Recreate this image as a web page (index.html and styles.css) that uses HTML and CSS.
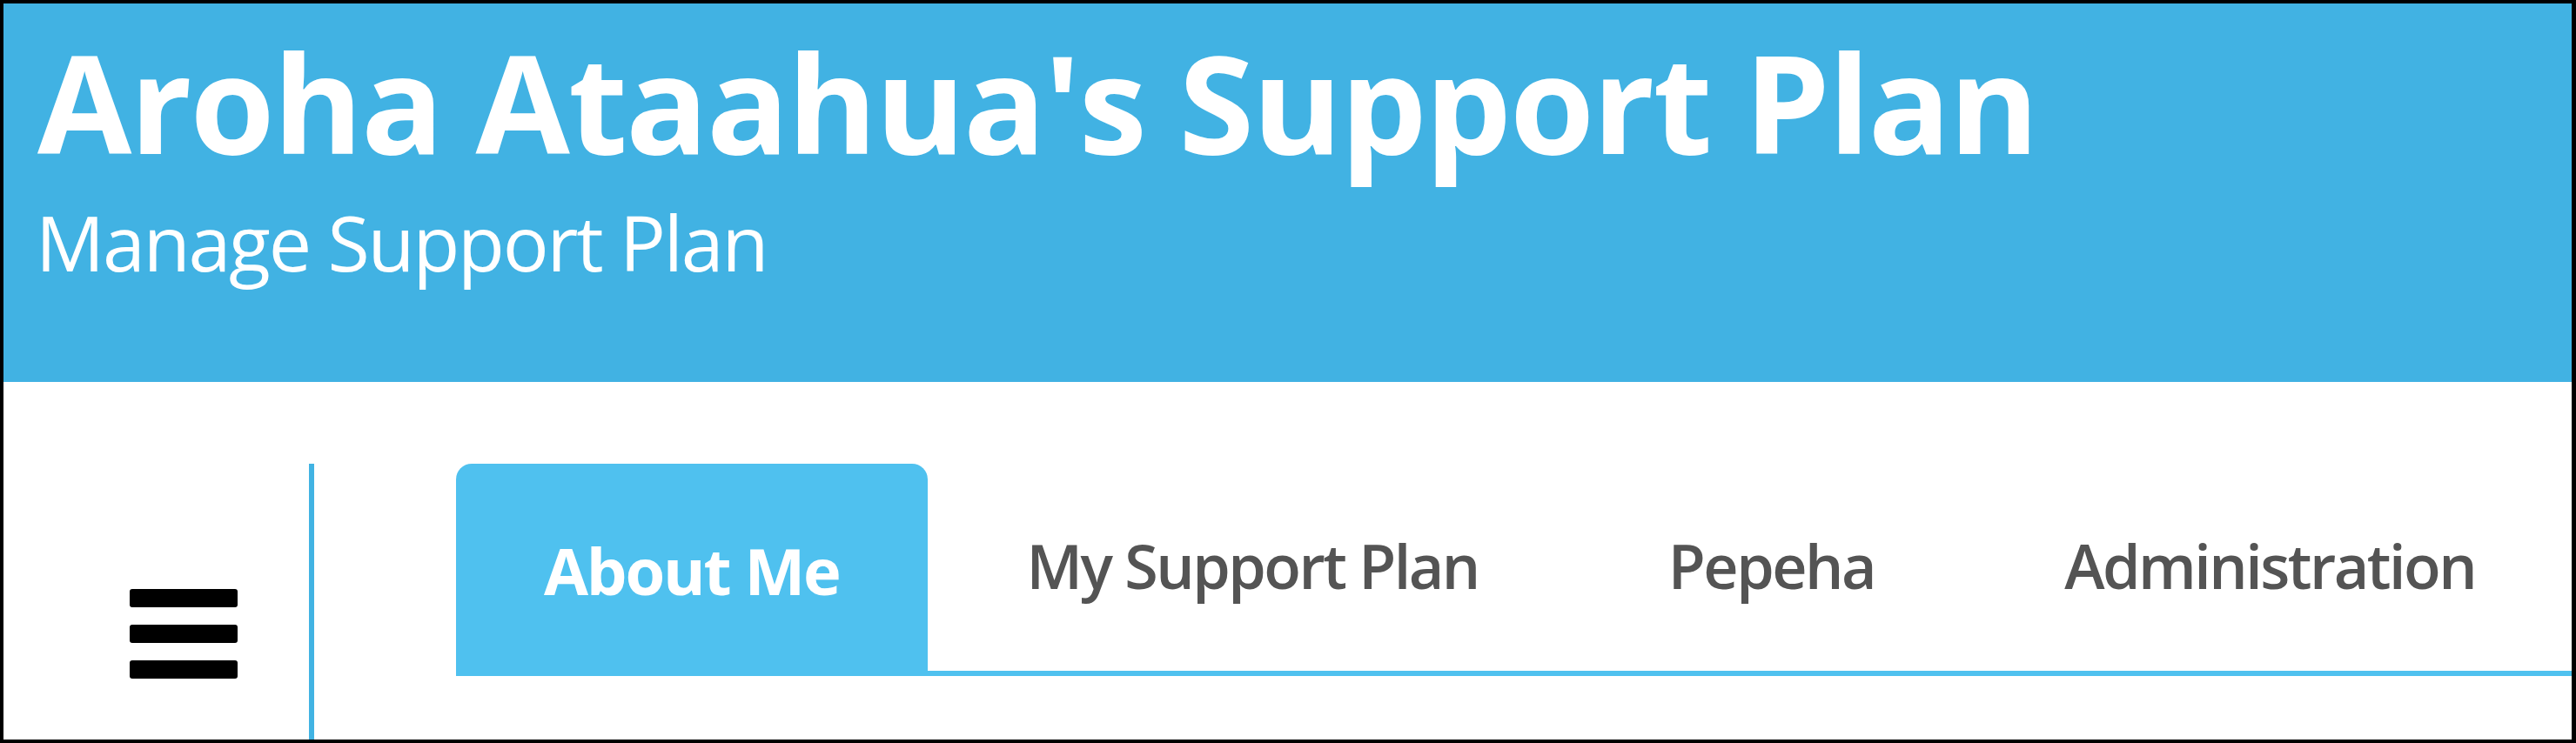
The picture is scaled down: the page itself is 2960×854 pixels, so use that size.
FILE: index.html
```html
<!DOCTYPE html>
<html lang="en">
<head>
  <meta charset="UTF-8">
  <meta name="viewport" content="width=device-width, initial-scale=1.0">
  <title>Aroha Ataahua's Support Plan</title>
  <link rel="stylesheet" href="styles.css">
</head>
<body>
  <div class="frame">
    <header class="banner">
      <h1 class="banner-title">Aroha Ataahua's Support Plan</h1>
      <p class="banner-sub">Manage Support Plan</p>
    </header>

    <div class="main">
      <aside class="sidebar">
        <button class="menu-btn" aria-label="Menu">
          <span class="bar"></span>
          <span class="bar"></span>
          <span class="bar"></span>
        </button>
      </aside>

      <section class="content">
        <ul class="tabs">
          <li class="tab active">About Me</li>
          <li class="tab">My Support Plan</li>
          <li class="tab">Pepeha</li>
          <li class="tab">Administration</li>
        </ul>
      </section>
    </div>
  </div>
</body>
</html>
```

FILE: styles.css
```css
* {
  margin: 0;
  padding: 0;
  box-sizing: border-box;
}
body {
  font-family: "Open Sans", "Noto Sans", sans-serif;
  background-color: #fff;
}
.frame {
  height: 854px;
  border-style: solid;
  border-color: #000;
  border-width: 4px 5px 4px 4px;
  display: flex;
  flex-direction: column;
}

/* blue banner across the top */
.banner {
  height: 435px;
  background-color: #41b2e3;
  color: #fff;
  padding: 32px 0 0 39px;
}
.banner-title {
  font-size: 157px;
  font-weight: 700;
  line-height: 160px;
  letter-spacing: -2px;
}
.banner-sub {
  margin-top: 32px;
  margin-left: -2px;
  font-size: 88px;
  font-weight: 400;
  line-height: 100px;
  letter-spacing: -2.2px;
}

.main {
  flex: 1;
  display: flex;
  padding-top: 94px;
}

/* left column with the menu button */
.sidebar {
  width: 357px;
  border-right: 6px solid #41b3e3;
  padding: 144px 0 0 145px;
}
.menu-btn {
  background: none;
  border: none;
  display: flex;
  flex-direction: column;
  gap: 20px;
  cursor: pointer;
}
.menu-btn .bar {
  display: block;
  width: 124px;
  height: 21px;
  background-color: #000;
  border-radius: 3px;
}

.content {
  flex: 1;
  padding-left: 163px;
}
.tabs {
  list-style: none;
  display: flex;
  border-bottom: 6px solid #4fc1ef;
}
.tab {
  height: 238px;
  padding: 67px 104px 0;
  margin-left: 10px;
  font-size: 70px;
  font-weight: 600;
  line-height: 100px;
  letter-spacing: -2.5px;
  color: #545454;
  white-space: nowrap;
  cursor: pointer;
}
.tab.active {
  margin-left: 0;
  padding: 73px 101px 0;
  background-color: #4fc1ef;
  border-radius: 18px 18px 0 0;
  color: #fff;
  font-size: 74px;
  font-weight: 700;
  letter-spacing: -2.2px;
}
```
